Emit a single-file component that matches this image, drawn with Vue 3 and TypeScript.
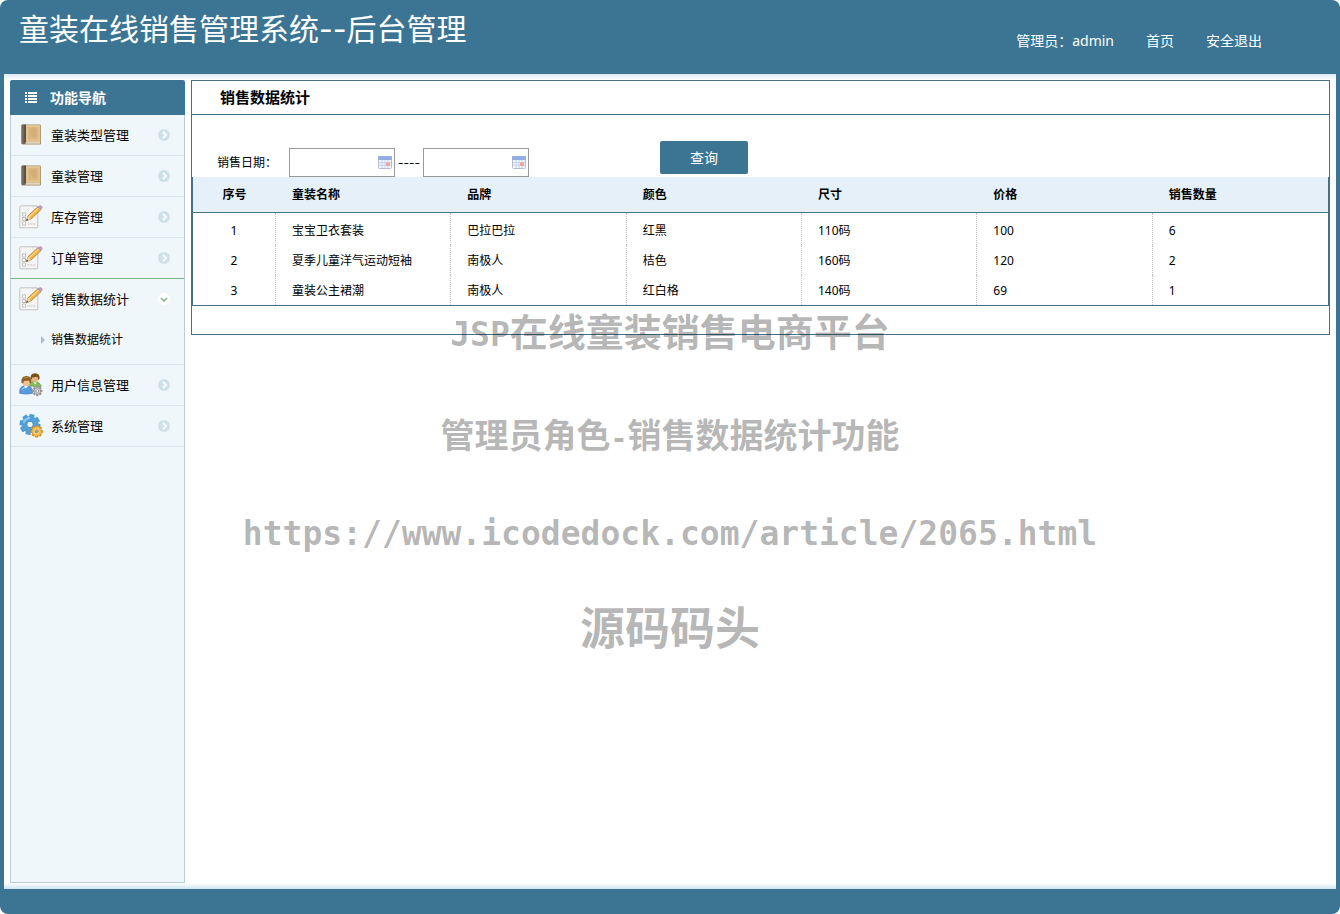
<script setup lang="ts">
import { ref } from 'vue'

type IconName = 'book' | 'note' | 'users' | 'gears'

interface MenuItem {
  id: number
  title: string
  icon: IconName
  children?: string[]
}

interface SaleRow {
  name: string
  brand: string
  color: string
  size: string
  price: number
  count: number
}

const menu: MenuItem[] = [
  { id: 1, title: '童装类型管理', icon: 'book' },
  { id: 2, title: '童装管理', icon: 'book' },
  { id: 3, title: '库存管理', icon: 'note' },
  { id: 4, title: '订单管理', icon: 'note' },
  { id: 5, title: '销售数据统计', icon: 'note', children: ['销售数据统计'] },
  { id: 6, title: '用户信息管理', icon: 'users' },
  { id: 7, title: '系统管理', icon: 'gears' },
]

const columns: string[] = ['序号', '童装名称', '品牌', '颜色', '尺寸', '价格', '销售数量']

const rows: SaleRow[] = [
  { name: '宝宝卫衣套装', brand: '巴拉巴拉', color: '红黑', size: '110码', price: 100, count: 6 },
  { name: '夏季儿童洋气运动短袖', brand: '南极人', color: '桔色', size: '160码', price: 120, count: 2 },
  { name: '童装公主裙潮', brand: '南极人', color: '红白格', size: '140码', price: 69, count: 1 },
]

const openId = ref<number>(5)
const startDate = ref<string>('')
const endDate = ref<string>('')

function toggle(id: number): void {
  openId.value = openId.value === id ? 0 : id
}

const teeth: number[] = [0, 45, 90, 135, 180, 225, 270, 315]
</script>

<template>
  <div class="page">
    <header class="top">
      <h1 class="brand">童装在线销售管理系统<span class="hyphens">--</span>后台管理</h1>
      <nav class="account">
        <span>管理员：admin</span>
        <a href="#home">首页</a>
        <a href="#logout">安全退出</a>
      </nav>
    </header>

    <div class="body">
      <aside class="side">
        <h2 class="side-head">
          <svg class="list-icon" viewBox="0 0 12 12" aria-hidden="true">
            <path d="M0 0h2v2H0zM3 0h9v2H3zM0 3h2v2H0zM3 3h9v2H3zM0 6h2v2H0zM3 6h9v2H3zM0 9h2v2H0zM3 9h9v2H3z" fill="#fff" />
          </svg>
          功能导航
        </h2>
        <ul class="menu">
          <li v-for="item in menu" :key="item.id" class="entry" :class="{ open: item.id === openId }">
            <button class="entry-head" type="button" :aria-expanded="item.id === openId" @click="toggle(item.id)">
              <svg v-if="item.icon === 'book'" class="icon" viewBox="0 0 24 24" aria-hidden="true">
                <rect x="2.5" y="1.5" width="19.5" height="20" rx="1" fill="#a08a6a" />
                <rect x="7" y="2" width="14.3" height="17" fill="#dfbf8c" />
                <rect x="8.5" y="3.5" width="11.3" height="13.5" fill="#d9b781" stroke="#e7cd9f" stroke-width="0.7" />
                <path d="M11 6l4-1 3 2-1 3 1 3-4 1-2-2z" fill="#d2aa6c" opacity=".7" />
                <rect x="4" y="19.2" width="17" height="1.4" fill="#f1e9d9" />
                <rect x="2.5" y="1.5" width="4.3" height="19.5" rx="1" fill="#74675e" />
                <rect x="5.5" y="1.5" width="1.2" height="17.8" fill="#4d423a" />
              </svg>
              <svg v-else-if="item.icon === 'note'" class="icon" viewBox="0 0 24 24" aria-hidden="true">
                <rect x="0.8" y="0.8" width="18" height="22" rx="0.8" fill="#f5f5f5" stroke="#c2c2c2" />
                <path d="M13 1.3h5.6V7z" fill="#fff" stroke="#cecece" stroke-width=".7" />
                <g fill="#fff" stroke="#c2c2c2">
                  <rect x="3.5" y="8" width="3" height="3" />
                  <rect x="3.5" y="12.5" width="3" height="3" />
                  <rect x="3.5" y="17" width="3" height="3" />
                </g>
                <path d="M8.5 14.7h3M8.5 19h8" stroke="#c2c2c2" stroke-width="1" stroke-dasharray="2 1" />
                <path d="M7.2 15.8l1.8-5L19 1.6l3 3L12 14z" fill="#f4b43d" stroke="#a56e21" stroke-width=".7" />
                <path d="M10.3 11.7L20 2.7" stroke="#ffe09a" stroke-width="1.1" />
                <path d="M7.2 15.8l1.8-5 3 3.2z" fill="#efd7b1" />
                <path d="M7.2 15.8l.8-2.2 1.3 1.3z" fill="#393939" />
                <path d="M18.4 2.2l1.4-1.4 3.1 3-1.4 1.4z" fill="#a8a6a8" />
                <path d="M19.4 1.2l.8-.7q1.3-.8 2.6.4t.4 2.5l-.7.8z" fill="#c795c3" />
              </svg>
              <svg v-else-if="item.icon === 'users'" class="icon" viewBox="0 0 24 24" aria-hidden="true">
                <path d="M10.5 13v-1.5q1-3.2 5-3.2t6.5 4V14z" fill="#86b95a" stroke="#618f40" stroke-width=".6" />
                <path d="M14.5 9.4l1.5 2 2-2z" fill="#fff" />
                <circle cx="16" cy="5" r="4" fill="#e7b980" />
                <path d="M11.6 5.8Q11 .4 16 .2q5.3.1 4.5 5.8l-1.3.7-.8-3-5.2.8-.5 2z" fill="#785018" />
                <path d="M.8 20.3v-3q.7-4.5 6.2-4.5t6.5 4.6v2.9q-6.5 1.6-12.7 0z" fill="#579bdf" stroke="#3a77bb" stroke-width=".7" />
                <path d="M3 16.5q1.5-2.4 4-2.4" stroke="#a4d1fb" stroke-width="1.2" fill="none" />
                <path d="M5 13.1l2 2.5 2-2.5z" fill="#fff" />
                <circle cx="7.3" cy="8.8" r="4.2" fill="#efc18c" />
                <path d="M2.5 9.7Q1.7 3 7.4 3.1q5.7.1 4.9 6.5l-1.4 1-.8-3.2-5.2.5-.8 2.7z" fill="#8b5f22" />
                <path d="M4.5 5.2q2-1.3 4.5-.6" stroke="#bb8b43" fill="none" />
                <g transform="translate(18.3 18)">
                  <rect v-for="a in teeth" :key="a" x="-1.2" y="-5.2" width="2.4" height="3" fill="#999" :transform="`rotate(${a})`" />
                  <circle r="3.3" fill="#d6d6d6" stroke="#8a8a8a" stroke-width=".8" />
                  <circle r="1.4" fill="#f7fbfc" stroke="#868686" stroke-width=".8" />
                </g>
              </svg>
              <svg v-else class="icon" viewBox="0 0 24 24" aria-hidden="true">
                <g transform="translate(11 10.5)">
                  <rect v-for="a in teeth" :key="a" x="-2.6" y="-10.4" width="5.2" height="5" rx=".7" fill="#4c9bd2" :transform="`rotate(${a + 12})`" />
                  <circle r="8.6" fill="#559fd6" />
                  <path d="M-6.5-1.5Q-5-6 0-6.5" stroke="#8dc9ef" stroke-width="1.8" fill="none" />
                  <circle r="3.2" fill="#f0f7fb" stroke="#3781b8" stroke-width=".8" />
                </g>
                <g transform="translate(17.7 17.4)">
                  <rect v-for="a in teeth" :key="a" x="-1.5" y="-6.2" width="3" height="3" rx=".4" fill="#d89020" :transform="`rotate(${a})`" />
                  <circle r="4.8" fill="#f6bd4c" stroke="#d9972f" stroke-width=".7" />
                  <circle r="2.6" fill="#ffe09a" />
                  <circle r="1.6" fill="#8ba2a8" stroke="#c67d21" stroke-width=".7" />
                </g>
              </svg>
              <span class="entry-title">{{ item.title }}</span>
              <svg v-if="item.id === openId" class="arrow" viewBox="0 0 12 12" aria-hidden="true">
                <circle cx="6" cy="6" r="6" fill="#fff" />
                <path d="M3 5l3 3 3-3" fill="none" stroke="#78b383" stroke-width="1.5" />
              </svg>
              <svg v-else class="arrow" viewBox="0 0 12 12" aria-hidden="true">
                <circle cx="6" cy="6" r="6" fill="#cfe1e8" />
                <path d="M5 3l3 3-3 3" fill="none" stroke="#fff" stroke-width="1.8" />
              </svg>
            </button>
            <ul v-if="item.children && item.id === openId" class="submenu">
              <li v-for="child in item.children" :key="child">
                <a href="#statistics">
                  <svg class="pointer" viewBox="0 0 4 8" aria-hidden="true"><path d="M0 0l4 4-4 4z" fill="#a7bdc7" /></svg>
                  {{ child }}
                </a>
              </li>
            </ul>
          </li>
        </ul>
      </aside>

      <main class="panel">
        <h2 class="panel-title">销售数据统计</h2>
        <form class="search" @submit.prevent>
          <label class="search-label" for="start-date">销售日期：</label>
          <div class="date">
            <input id="start-date" v-model="startDate" type="text" />
            <svg class="calendar" viewBox="0 0 14 13" aria-hidden="true">
              <rect x=".5" y=".5" width="13" height="12" rx="1" fill="#f1f5fc" stroke="#b3bdd3" />
              <path d="M0 1.3Q0 0 1.3 0h11.4Q14 0 14 1.3V4H0z" fill="#91ade1" />
              <path d="M1 6.5h12M1 9.2h12M4 4v8M7 4v8M10 4v8" stroke="#c6d4ec" />
              <rect x="8" y="6.5" width="4" height="3.5" fill="#eda69b" />
            </svg>
          </div>
          <span class="dash">----</span>
          <div class="date">
            <input id="end-date" v-model="endDate" type="text" aria-label="结束日期" />
            <svg class="calendar" viewBox="0 0 14 13" aria-hidden="true">
              <rect x=".5" y=".5" width="13" height="12" rx="1" fill="#f1f5fc" stroke="#b3bdd3" />
              <path d="M0 1.3Q0 0 1.3 0h11.4Q14 0 14 1.3V4H0z" fill="#91ade1" />
              <path d="M1 6.5h12M1 9.2h12M4 4v8M7 4v8M10 4v8" stroke="#c6d4ec" />
              <rect x="8" y="6.5" width="4" height="3.5" fill="#eda69b" />
            </svg>
          </div>
          <button class="query" type="submit">查询</button>
        </form>
        <table class="sales">
          <thead>
            <tr>
              <th v-for="column in columns" :key="column" scope="col">{{ column }}</th>
            </tr>
          </thead>
          <tbody>
            <tr v-for="(row, index) in rows" :key="row.name">
              <td>{{ index + 1 }}</td>
              <td>{{ row.name }}</td>
              <td>{{ row.brand }}</td>
              <td>{{ row.color }}</td>
              <td>{{ row.size }}</td>
              <td>{{ row.price }}</td>
              <td>{{ row.count }}</td>
            </tr>
          </tbody>
        </table>
      </main>
    </div>

    <div class="watermark">
      <p class="mark-platform"><span class="mark-latin">JSP</span>在线童装销售电商平台</p>
      <p class="mark-feature">管理员角色<span class="mark-hyphen">-</span>销售数据统计功能</p>
      <p class="mark-url">https://www.icodedock.com/article/2065.html</p>
      <p class="mark-site">源码码头</p>
    </div>
  </div>
</template>

<style>
body {
  margin: 0;
  background: #fff;
}
</style>

<style scoped>
.page {
  position: relative;
  display: flex;
  flex-direction: column;
  box-sizing: border-box;
  min-height: 100vh;
  padding: 0 4px 25px;
  border-radius: 8px;
  background: #3b7593;
  color: #000;
  font-family: "Noto Sans", "Noto Sans CJK SC", sans-serif;
  font-size: 12px;
  line-height: 20px;
}

h1,
h2,
p,
ul {
  margin: 0;
  padding: 0;
}

ul {
  list-style: none;
}

a {
  color: inherit;
  text-decoration: none;
}

button,
input {
  font: inherit;
}

.top {
  display: flex;
  justify-content: space-between;
  height: 74px;
  padding: 0 74px 0 15px;
  color: #fff;
}

.brand {
  padding-top: 9px;
  font-size: 30px;
  font-weight: 400;
  line-height: 40px;
}

.hyphens {
  font-family: Inter, sans-serif;
}

.account {
  display: flex;
  gap: 32px;
  padding-top: 31px;
  font-size: 14px;
}

.body {
  display: flex;
  flex: 1;
  gap: 6px;
  padding: 6px;
  background:
    linear-gradient(#deebf3, #fff) top / 100% 6px no-repeat,
    linear-gradient(#fff, #cfe4f0) bottom / 100% 6px no-repeat,
    #fff;
}

.side {
  flex: none;
  display: flex;
  flex-direction: column;
  width: 175px;
}

.side-head {
  display: flex;
  align-items: center;
  gap: 13px;
  height: 35px;
  padding-left: 15px;
  border-radius: 2px 2px 0 0;
  background: #3b7593;
  color: #fff;
  font-size: 14px;
}

.list-icon {
  width: 12px;
  height: 12px;
}

.menu {
  flex: 1;
  border: 1px solid #b8cdd7;
  border-top: 0;
  background: #f0f7fb;
}

.entry {
  border-bottom: 1px solid #d8e6ec;
}

.entry:has(+ .open) {
  border-bottom-color: #78b383;
}

.entry-head {
  display: flex;
  align-items: center;
  width: 100%;
  height: 40px;
  padding: 0 14px 0 8px;
  border: 0;
  background: none;
  color: inherit;
  font-size: 13px;
  text-align: left;
}

.icon {
  flex: none;
  width: 24px;
  height: 24px;
}

.entry-title {
  flex: 1;
  margin-left: 8px;
}

.arrow {
  width: 12px;
  height: 12px;
}

.submenu {
  padding: 6px 0 9px;
}

.submenu a {
  display: flex;
  align-items: center;
  gap: 6px;
  height: 30px;
  padding-left: 30px;
}

.pointer {
  width: 4px;
  height: 8px;
}

.panel {
  flex: 1;
  align-self: flex-start;
  min-width: 0;
  padding-bottom: 28px;
  border: 1px solid #44708a;
}

.panel-title {
  padding-left: 28px;
  border-bottom: 1px solid #44708a;
  font-size: 15px;
  line-height: 33px;
}

.search {
  display: flex;
  align-items: flex-end;
  padding: 26px 25px 0;
}

.search-label {
  width: 72px;
  line-height: 29px;
}

.date {
  position: relative;
  width: 106px;
  height: 29px;
}

.date input {
  box-sizing: border-box;
  width: 100%;
  height: 100%;
  padding: 0 22px 0 4px;
  border: 1px solid #999;
  border-radius: 0;
  background: #fff;
}

.calendar {
  position: absolute;
  top: 8px;
  right: 3px;
  width: 14px;
  height: 13px;
  pointer-events: none;
}

.dash {
  width: 28px;
  font-family: Inter, sans-serif;
  line-height: 29px;
  text-align: center;
}

.query {
  align-self: flex-start;
  width: 88px;
  height: 33px;
  margin: 0 0 3px 131px;
  padding: 0;
  border: 0;
  border-radius: 2px;
  background: #3b7593;
  color: #fff;
  font-size: 14px;
}

.sales {
  width: 100%;
  table-layout: fixed;
  border: solid #44708a;
  border-width: 0 1px 1px;
  border-spacing: 0;
}

.sales th {
  height: 35px;
  padding: 0 0 0 16px;
  border-bottom: 1px solid #44708a;
  background: #e6f0f8;
  text-align: left;
}

.sales td {
  height: 28px;
  padding: 2px 0 0 16px;
  border-right: 1px dotted #c3c3c3;
}

.sales tbody tr:first-child td {
  padding-top: 4px;
}

.sales th:first-child,
.sales td:first-child {
  box-sizing: content-box;
  width: 83px;
  padding-left: 0;
  text-align: center;
}

.sales td:last-child {
  border-right: 0;
}

.watermark {
  position: absolute;
  top: 300px;
  left: 0;
  right: 0;
  color: rgba(0, 0, 0, 0.3);
  font-family: "Noto Sans CJK SC", sans-serif;
  font-weight: 700;
  line-height: 60px;
  text-align: center;
  pointer-events: none;
}

.mark-platform {
  font-size: 38px;
}

.mark-latin {
  font-family: "DejaVu Sans Mono", monospace;
  font-size: 33px;
}

.mark-feature {
  margin-top: 39px;
  font-size: 34px;
}

.mark-hyphen {
  font-family: "DejaVu Sans Mono", monospace;
  font-size: 28px;
}

.mark-url {
  margin-top: 35px;
  font-family: "DejaVu Sans Mono", monospace;
  font-size: 33px;
}

.mark-site {
  margin-top: 32px;
  font-size: 45px;
}
</style>
